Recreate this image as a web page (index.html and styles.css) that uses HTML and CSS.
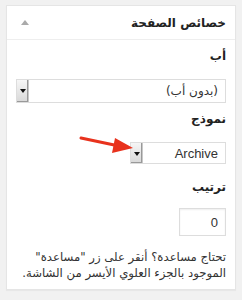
FILE: index.html
```html
<!DOCTYPE html>
<html lang="ar" dir="rtl">
<head>
    <meta charset="UTF-8">
    <title>خصائص الصفحة</title>
    <link rel="stylesheet" href="styles.css">
</head>
<body>
    <div class="postbox">
        <div class="postbox-header">
            <h2>خصائص الصفحة</h2>
            <span class="toggle"></span>
        </div>
        <div class="inside">
            <p class="label">أب</p>
            <div class="select wide">
                <span class="value">(بدون أب)</span>
                <span class="arrow"></span>
            </div>

            <p class="label">نموذج</p>
            <div class="select narrow">
                <span class="value">Archive</span>
                <span class="arrow"></span>
            </div>

            <p class="label order">ترتيب</p>
            <div class="number">0</div>

            <p class="help">تحتاج مساعدة؟ أنقر على زر "مساعدة"<br>الموجود بالجزء العلوي الأيسر من الشاشة.</p>
        </div>

        <!-- red pointer over the template select -->
        <svg class="pointer" width="60" height="24" viewBox="0 0 60 24">
            <line x1="2" y1="5" x2="40" y2="13" stroke="#e8321d" stroke-width="3" stroke-linecap="round"/>
            <polygon points="36,5 54,15 33,20" fill="#e8321d"/>
        </svg>
    </div>
</body>
</html>
```
FILE: styles.css
```css
* {
    margin: 0;
    padding: 0;
    box-sizing: border-box;
}

body {
    font-family: "DejaVu Sans", "Noto Sans", sans-serif;
    background-color: #f1f1f1;
    padding: 5px 6px;
    color: #333;
}

.postbox {
    position: relative;
    background-color: #fff;
    border: 1px solid #e5e5e5;
    box-shadow: 0 1px 1px rgba(0, 0, 0, 0.04);
    height: 285px;
}

.postbox-header {
    display: flex;
    justify-content: space-between;
    align-items: center;
    height: 34px;
    padding: 0 9px 0 14px;
    border-bottom: 1px solid #eee;
}

.postbox-header h2 {
    font-size: 12px;
    font-weight: bold;
    color: #222;
}

.toggle {
    width: 0;
    height: 0;
    border-left: 4px solid transparent;
    border-right: 4px solid transparent;
    border-bottom: 5px solid #aaa;
}

.inside {
    padding: 0 9px 0 9px;
}

.label {
    font-size: 12px;
    font-weight: bold;
    color: #222;
    margin-top: 9px;
    margin-bottom: 16px;
}

.label.order {
    margin-top: 16px;
    margin-bottom: 14px;
}

.select {
    display: flex;
    align-items: stretch;
    height: 24px;
    border: 1px solid #ddd;
    background-color: #fff;
    font-size: 12px;
}

.select .value {
    flex: 1;
    display: flex;
    align-items: center;
    padding-right: 7px;
}

.select .arrow {
    width: 12px;
    border-right: 1px solid #c8c8c8;
    background: linear-gradient(#f6f6f6, #d8d8d8);
    box-shadow: inset -1px -1px 0 #999;
    position: relative;
}

.select .arrow::after {
    content: "";
    position: absolute;
    left: 3px;
    top: 9px;
    border-left: 3px solid transparent;
    border-right: 3px solid transparent;
    border-top: 4px solid #111;
}

.narrow {
    width: 96px;
    height: 22px;
}

.narrow .value {
    font-family: "Liberation Sans", sans-serif;
    font-size: 13px;
    justify-content: flex-end;
    direction: ltr;
    padding-right: 7px;
}

.number {
    width: 47px;
    height: 28px;
    border: 1px solid #ddd;
    box-shadow: inset 0 1px 2px rgba(0, 0, 0, 0.07);
    font-family: "Liberation Sans", sans-serif;
    font-size: 13px;
    display: flex;
    align-items: center;
    padding-right: 7px;
    margin-bottom: 13px;
}

.help {
    font-size: 11.7px;
    line-height: 16px;
    color: #333;
    white-space: nowrap;
}

.pointer {
    position: absolute;
    left: 72px;
    top: 127px;
}
```
